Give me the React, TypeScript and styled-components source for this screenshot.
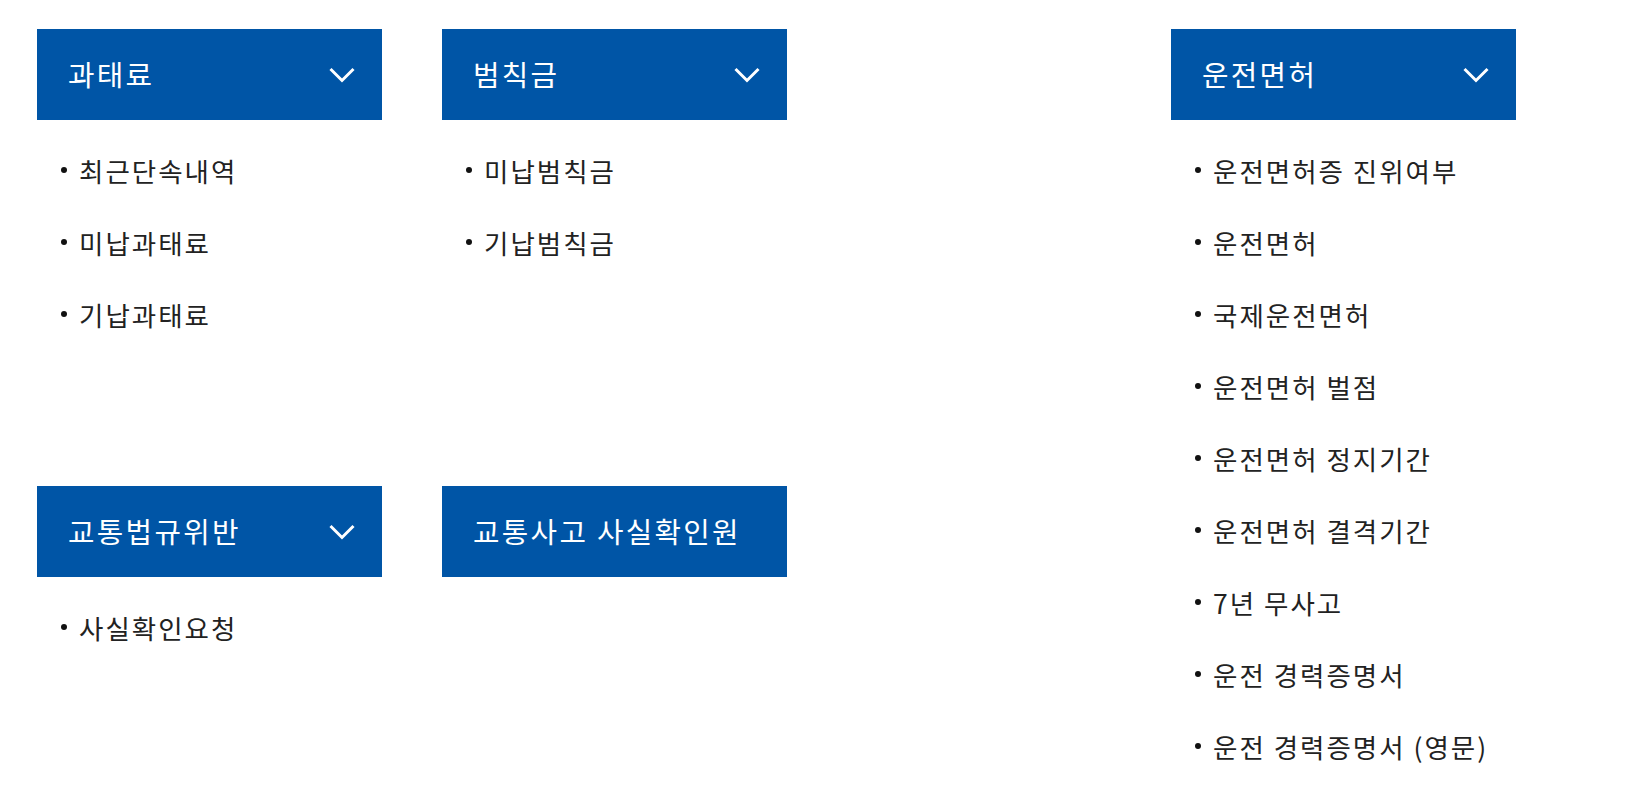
import React from 'react'
import styled, { createGlobalStyle } from 'styled-components'

const GlobalStyle = createGlobalStyle`
  html, body {
    margin: 0;
    padding: 0;
    background: #ffffff;
  }
  body {
    font-family: "Noto Sans CJK KR", "Noto Sans", sans-serif;
    color: #222222;
  }
`

interface MenuGroup {
  title: string
  items: string[]
  expandable: boolean
}

const leftGroups: MenuGroup[] = [
  { title: '과태료', items: ['최근단속내역', '미납과태료', '기납과태료'], expandable: true },
  { title: '범칙금', items: ['미납범칙금', '기납범칙금'], expandable: true },
  { title: '교통법규위반', items: ['사실확인요청'], expandable: true },
  { title: '교통사고 사실확인원', items: [], expandable: false },
]

const licenseGroup: MenuGroup = {
  title: '운전면허',
  items: [
    '운전면허증 진위여부',
    '운전면허',
    '국제운전면허',
    '운전면허 벌점',
    '운전면허 정지기간',
    '운전면허 결격기간',
    '7년 무사고',
    '운전 경력증명서',
    '운전 경력증명서 (영문)',
  ],
  expandable: true,
}

const Page = styled.div`
  display: flex;
  gap: 384px;
  padding: 29px 0 0 37px;
`

const LeftGroup = styled.div`
  display: grid;
  grid-template-columns: 345px 345px;
  grid-template-rows: 457px auto;
  column-gap: 60px;
`

const Section = styled.section`
  width: 345px;
`

const Header = styled.div`
  display: flex;
  align-items: center;
  justify-content: space-between;
  height: 91px;
  padding: 0 27px 0 31px;
  box-sizing: border-box;
  background: #0055a6;
  color: #ffffff;
  cursor: pointer;
`

const Title = styled.span`
  font-size: 28.8px;
  font-weight: 400;
  letter-spacing: 2.3px;
  line-height: 1;
  white-space: nowrap;
`

const List = styled.ul`
  list-style: none;
  margin: 0;
  padding: 14px 0 0 0;
`

const Item = styled.li`
  display: flex;
  align-items: center;
  height: 72px;
  font-size: 26.5px;
  letter-spacing: 2px;
  color: #222222;
  white-space: nowrap;
`

const Dot = styled.span`
  width: 6px;
  height: 6px;
  margin: 0 12px 0 24px;
  border-radius: 50%;
  background: #111111;
  flex-shrink: 0;
`

const Chevron = () => (
  <svg width="26" height="16" viewBox="0 0 26 16" fill="none">
    <path d="M1.5 2 L13 13.5 L24.5 2" stroke="#ffffff" strokeWidth="3" />
  </svg>
)

const Menu: React.FC<{ group: MenuGroup }> = ({ group }) => (
  <Section>
    <Header>
      <Title>{group.title}</Title>
      {group.expandable && <Chevron />}
    </Header>
    {group.items.length > 0 && (
      <List>
        {group.items.map((item) => (
          <Item key={item}>
            <Dot />
            {item}
          </Item>
        ))}
      </List>
    )}
  </Section>
)

const App: React.FC = () => (
  <>
    <GlobalStyle />
    <Page>
      <LeftGroup>
        {leftGroups.map((g) => (
          <Menu key={g.title} group={g} />
        ))}
      </LeftGroup>
      <Menu group={licenseGroup} />
    </Page>
  </>
)

export default App
